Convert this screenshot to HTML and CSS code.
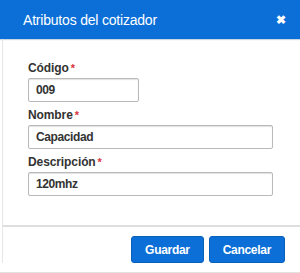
FILE: index.html
```html
<!DOCTYPE html>
<html lang="es">
<head>
  <meta charset="UTF-8">
  <title>Atributos del cotizador</title>
  <link rel="stylesheet" href="styles.css">
</head>
<body>
  <div class="modal">
    <div class="modal-header">
      <span class="modal-title">Atributos del cotizador</span>
      <span class="close">&#10006;</span>
    </div>
    <div class="modal-body">
      <form id="atributoForm">
        <label for="codigo">Código<span class="req">*</span></label>
        <input type="text" id="codigo" class="short" value="009">

        <label for="nombre">Nombre<span class="req">*</span></label>
        <input type="text" id="nombre" value="Capacidad">

        <label for="descripcion">Descripción<span class="req">*</span></label>
        <input type="text" id="descripcion" value="120mhz">
      </form>
    </div>
    <div class="modal-footer">
      <button type="button" class="btn">Guardar</button>
      <button type="button" class="btn">Cancelar</button>
    </div>
  </div>
</body>
</html>
```

FILE: styles.css
```css
/* Ventana modal de atributos */
body {
  margin: 0;
  font-family: "Liberation Sans", Arial, sans-serif;
  background: #fff;
  color: #333;
}
.modal {
  width: 300px;
  height: 273px;
  box-sizing: border-box;
  border-bottom: 1px solid #e2e2e2;
}
.modal-header {
  height: 39px;
  background: #0b6fd7;
  color: #fff;
  display: flex;
  align-items: center;
  justify-content: space-between;
  padding: 0 14px 0 23px;
  box-shadow: 0 1px 1px #c9d6e4;
}
.modal-title {
  font-size: 14px;
  letter-spacing: -0.2px;
}
.close {
  font-size: 12px;
  font-weight: bold;
}
.modal-body {
  margin-left: 2px;
  border-left: 1px solid #e6e6e6;
  padding: 21px 0 28px 25px;
  height: 137px;
}
form {
  display: flex;
  flex-direction: column;
  align-items: flex-start;
}
label {
  font-size: 12px;
  font-weight: bold;
  letter-spacing: -0.1px;
  line-height: 16px;
  height: 16px;
  margin-bottom: 2px;
}
.req {
  color: #d9353b;
  font-size: 11px;
  vertical-align: top;
  margin-left: 2px;
}
input {
  width: 245px;
  height: 24px;
  box-sizing: border-box;
  margin: 0 0 5px;
  padding: 0 7px;
  border: 1px solid #b9b9b9;
  border-radius: 2px;
  box-shadow: inset 0 1px 1px #e2e2e2;
  font-family: inherit;
  font-size: 12px;
  font-weight: bold;
  letter-spacing: -0.4px;
  color: #333;
}
input.short {
  width: 111px;
}
.modal-footer {
  margin-left: 2px;
  border-top: 2px solid #dedede;
  border-left: 1px solid #e6e6e6;
  display: flex;
  justify-content: flex-end;
  gap: 5px;
  padding: 9px 15px 0 0;
}
.btn {
  height: 27px;
  padding: 0 13px;
  background: #0b6fd7;
  border: 1px solid #0a5fb9;
  border-radius: 3px;
  color: #fff;
  font-family: inherit;
  font-size: 12px;
  font-weight: bold;
  letter-spacing: -0.3px;
}
```
